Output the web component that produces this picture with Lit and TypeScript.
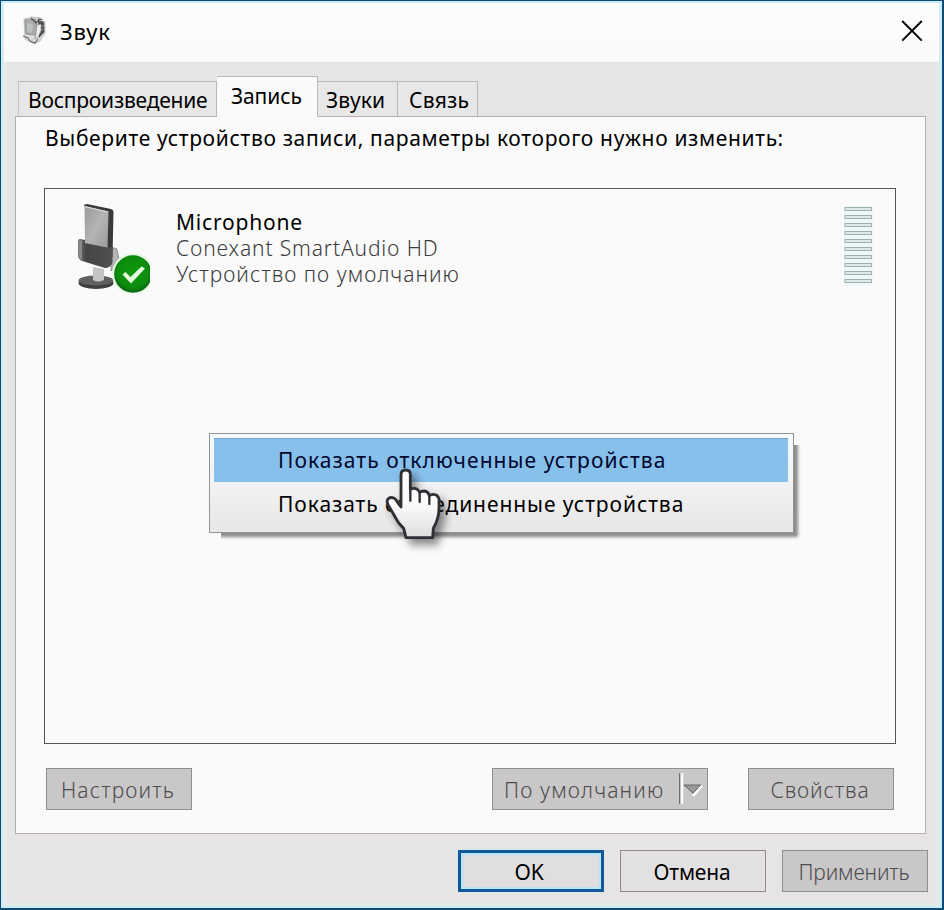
import { LitElement, css, html, svg } from "lit";
import { customElement, property } from "lit/decorators.js";

const speakerIcon = html`
  <svg width="26" height="30" viewBox="0 0 26 30">
    <path d="M3 3 L10 1 L20 2 L24 6 L24 17 L19 25 L13 28 L4 23 Z" fill="#d9dcdb" stroke="#b5b9b8" stroke-width="0.8" />
    <path d="M17 4 L23 6 L23.500 16 L18 22 Z" fill="#505353" />
    <path d="M4 4 L14 3 L16 8 L15 19 L5 18 Z" fill="#a9acab" stroke="#858585" stroke-width="0.8" />
    <path d="M6 7 L12 8 L11 17 L6 16 Z" fill="#bcc0bf" />
    <path d="M10 2 L15 7 L18 3 L21 4" fill="none" stroke="#555" stroke-width="1.200" />
    <path d="M16 9 L20 8 L20 15 L17 21 L14 23 Z" fill="#eceded" stroke="#888" stroke-width="0.7" />
    <path d="M2 20 L7 22 L9 25 L14 27 L17 23" fill="none" stroke="#666" stroke-width="1.100" />
    <path d="M20 10 L23 10 M20 14 L23 13" stroke="#999" stroke-width="0.8" />
  </svg>
`;

const closeIcon = html`
  <svg width="22" height="22" viewBox="0 0 22 22">
    <path d="M1.200 1 L20.800 20.600 M20.800 1 L1.200 20.600" stroke="#000" stroke-width="1.900" fill="none" />
  </svg>
`;

const microphoneIcon = html`
  <svg width="80" height="96" viewBox="0 0 80 96">
    <defs>
      <linearGradient id="face" x1="0" y1="0" x2="1" y2="1">
        <stop offset="0" stop-color="#9a9a9a" />
        <stop offset="0.500" stop-color="#b4b4b4" />
        <stop offset="1" stop-color="#989898" />
      </linearGradient>
      <linearGradient id="holder" x1="0" y1="0" x2="1" y2="0">
        <stop offset="0" stop-color="#707070" />
        <stop offset="0.250" stop-color="#454545" />
        <stop offset="1" stop-color="#505050" />
      </linearGradient>
      <radialGradient id="ok" cx="0.500" cy="0.450" r="0.550">
        <stop offset="0" stop-color="#0f980f" />
        <stop offset="0.750" stop-color="#0d8c0d" />
        <stop offset="1" stop-color="#0b5f14" />
      </radialGradient>
    </defs>
    <ellipse cx="26" cy="86" rx="17.500" ry="6" fill="#3f3f3f" />
    <ellipse cx="26" cy="83.500" rx="17.500" ry="5" fill="#606060" />
    <path d="M23 70 L34 72 L34 83 Q28 86 23 83 Z" fill="#c4c4c4" />
    <path d="M41 50 L47 52 L49 62 L46 70 L41 74 Z" fill="#b4b4b4" stroke="#888" stroke-width="0.8" />
    <path d="M14 9 Q14 7 17 7 L41 12 Q43.500 12.500 43.500 15 L42.500 60 L37 60 L37 17 Z" fill="#3a3a3a" />
    <path d="M14.500 9 L38.500 14.500 L37.500 52 L15 46 Z" fill="url(#face)" />
    <path d="M15 9.600 L38 15" stroke="#dadada" stroke-width="1.200" />
    <path d="M8 44 Q8 42 10 42 L15 43 L15 46 L37 50.500 L42.500 50 L42.500 66 Q40 71 35 71 L12 64 Q8 62 8 58 Z" fill="url(#holder)" />
    <path d="M8.500 44 L12 43 L12 63 L8.500 60 Z" fill="#8a8a8a" />
    <circle cx="63" cy="77" r="21" fill="#e4f9e3" />
    <circle cx="63" cy="77" r="18.800" fill="url(#ok)" />
    <path d="M52.500 77.500 L55.500 75 L60.500 80 L71.500 69.500 L75 71.500 L61 86.500 Z" fill="#e2fadf" />
  </svg>
`;

const levelMeter = html`
  <svg width="29" height="80" viewBox="0 0 29 80">
    <rect width="29" height="80" fill="#eff8f8" />
    ${Array.from({ length: 10 }, (_, i) => svg`
      <rect x="1" y=${1.5 + i * 8} width="26.500" height="3" fill="#dcebea" stroke="#9db1b0" stroke-width="1" />
    `)}
  </svg>
`;

const dropArrow = html`
  <svg width="28" height="40" viewBox="0 0 28 40">
    <path d="M0.500 4 V35" stroke="#6e6e6e" stroke-width="1" />
    <path d="M3.200 4 V35" stroke="#fff" stroke-width="2" />
    <path d="M5 16 H22 L14 24 Z" fill="#9a9a9a" stroke="#666" stroke-width="1" />
    <path d="M14 27 L23 17" stroke="#fff" stroke-width="2.600" />
  </svg>
`;

const handCursor = html`
  <svg width="90" height="90" viewBox="0 0 270 270">
    <defs>
      <linearGradient id="palm" x1="0" y1="0" x2="0" y2="1">
        <stop offset="0.500" stop-color="#fbfbfb" />
        <stop offset="1" stop-color="#dedede" />
      </linearGradient>
    </defs>
    <path
      d="M107 30 Q93 30 93 44 L93 141 Q83 128 76 117 Q66 109 56 115 Q48 121 54 134 L76 172 Q84 190 101 205 L108 233 L188 233 L190 205 Q207 176 207 145 L207 118 Q204 103 190 103 Q183 103 178 107 Q174 94 162 93 Q155 93 149 97 Q143 85 132 85 Q126 85 121 88 L121 44 Q121 30 107 30 Z"
      fill="url(#palm)"
      stroke="#2d3136"
      stroke-width="8.500"
      stroke-linejoin="round"
    />
    <path d="M121 84 V122 M149 96 V126 M178 106 V132" stroke="#2d3136" stroke-width="7" stroke-linecap="round" />
  </svg>
`;

@customElement("dialog-button")
export class DialogButton extends LitElement {
  @property()
  label = "";

  // "normal" | "primary" | "disabled"
  @property({ reflect: true })
  kind = "normal";

  @property({ type: Boolean, reflect: true })
  split = false;

  static styles = css`
    :host {
      display: flex;
      flex: none;
      box-sizing: border-box;
      width: 146px;
      height: 42px;
      font-size: 21px;
    }
    .button {
      flex: 1;
      display: flex;
      align-items: center;
      justify-content: center;
      border: 1px solid #8d898b;
      background: #e2e0e1;
      color: #000;
      white-space: nowrap;
      line-height: 40px;
    }
    .text {
      padding: 2px 2px 0 0;
    }
    :host([kind="primary"]) .button {
      border: 3px solid #0f5a94;
      background: #e0dedf;
      box-shadow: inset 0 0 0 2px #b5e4fb, 0 0 2px #c6ecfb;
      line-height: 36px;
    }
    :host([kind="primary"]) .text {
      padding-right: 4px;
    }
    :host([kind="disabled"]) .button {
      border-color: #8f8f8f;
      background: #c9c7c8;
      color: #4c4c4c;
      font-weight: 300;
    }
    :host([split]) {
      width: 216px;
    }
    :host([split]) .button {
      justify-content: space-between;
      padding-left: 11px;
    }
  `;

  render() {
    return html`
      <div class="button">
        <span class="text">${this.label}</span>
        ${this.split ? dropArrow : ""}
      </div>
    `;
  }
}

@customElement("app-root")
export class AppRoot extends LitElement {
  static styles = css`
    :host {
      display: block;
      font-family: "Noto Sans", "Open Sans", sans-serif;
      font-size: 21px;
      line-height: 26px;
      color: #000;
      white-space: nowrap;
    }
    .window {
      box-sizing: border-box;
      width: 944px;
      height: 910px;
      display: flex;
      flex-direction: column;
      background: #e6e4e5;
      border: 1px solid #0d4a75;
      border-width: 1px 2px 2px 1px;
      box-shadow: inset 0 0 0 2px #c9eef7, inset 0 0 6px 3px #e0f1f1;
      overflow: hidden;
    }
    .title-bar {
      box-sizing: border-box;
      height: 59px;
      margin: 2px 3px 0;
      padding: 0 16px 0 17px;
      display: flex;
      align-items: center;
      background: linear-gradient(#fafffd, #fcfcfb 12px, #fafafa);
    }
    .title {
      flex: 1;
      padding: 0 0 4px 13px;
      font-size: 22px;
      letter-spacing: 0.7px;
    }
    .title-bar svg {
      margin-bottom: 4px;
    }
    .tabs {
      height: 54px;
      display: flex;
      align-items: flex-end;
      padding-left: 17px;
    }
    .tab {
      box-sizing: border-box;
      height: 35px;
      padding: 5px 0 0 8px;
      border: 1px solid #b9b9b9;
      border-left: none;
      border-bottom: none;
      background: #e8e7e8;
    }
    .tab.playback {
      width: 199px;
      border-left: 1px solid #c4c4c4;
      padding-left: 9px;
      letter-spacing: -0.22px;
    }
    .tab.recording {
      width: 101px;
      height: 41px;
      margin-bottom: -1px;
      padding: 6px 0 0 14px;
      background: #fafafa;
      letter-spacing: -0.1px;
      position: relative;
    }
    .tab.sounds {
      width: 80px;
      letter-spacing: 0.1px;
    }
    .tab.comm {
      width: 80px;
      padding-left: 11px;
      letter-spacing: 0.2px;
    }
    .page {
      box-sizing: border-box;
      width: 911px;
      height: 718px;
      margin-left: 14px;
      padding: 8px 29px 0 28px;
      border: 1px solid #b4aeb2;
      background: #fafafa;
      display: flex;
      flex-direction: column;
    }
    .prompt {
      padding-left: 1px;
      letter-spacing: 0.66px;
      margin-bottom: 37px;
    }
    .devices {
      box-sizing: border-box;
      flex: none;
      width: 852px;
      height: 556px;
      border: 1px solid #555;
      padding: 8px 22px 0 25px;
      display: flex;
      align-items: flex-start;
      background: #fafafa;
    }
    .info {
      flex: 1;
      padding: 12px 0 0 26px;
    }
    .name {
      letter-spacing: 0.8px;
    }
    .detail {
      font-weight: 300;
      color: #3c3c3c;
      letter-spacing: 0.85px;
    }
    .detail.status {
      letter-spacing: 1.03px;
    }
    .meter {
      padding-top: 9px;
    }
    .page-actions {
      display: flex;
      padding: 24px 2px 0;
    }
    .configure {
      margin-right: auto;
      letter-spacing: 1.15px;
    }
    .default {
      margin-right: 40px;
      letter-spacing: 1.15px;
    }
    .properties {
      letter-spacing: 0.9px;
    }
    .footer {
      display: flex;
      justify-content: flex-end;
      gap: 16px;
      padding: 16px 14px 0 0;
      letter-spacing: -0.15px;
    }
    .context-menu {
      position: absolute;
      left: 209px;
      top: 433px;
      box-sizing: border-box;
      width: 585px;
      height: 100px;
      padding: 4px 5px 4px 4px;
      border: 1px solid #8f9494;
      background: linear-gradient(#f4fbfc, #f3f2f2 50%, #e8e6e6);
      box-shadow: 4px 4px 3px #8c8a8c;
      clip-path: polygon(0 0, 100% 0, 100% 12px, calc(100% + 12px) 12px, calc(100% + 12px) calc(100% + 12px), 12px calc(100% + 12px), 12px 100%, 0 100%);
    }
    .item {
      box-sizing: border-box;
      height: 44px;
      padding: 9px 0 0 64px;
      letter-spacing: 0.93px;
    }
    .item.active {
      background: #87c0ea;
      color: #00052e;
      letter-spacing: 1.06px;
      border-top: 1px solid #79a5c2;
      padding-top: 8px;
    }
    .cursor {
      position: absolute;
      left: 370px;
      top: 460px;
      filter: drop-shadow(5px 6px 4px rgba(0, 0, 0, 0.45));
    }
  `;

  render() {
    return html`
      <div class="window">
        <div class="title-bar">
          ${speakerIcon}
          <span class="title">Звук</span>
          ${closeIcon}
        </div>
        <div class="tabs">
          <div class="tab playback">Воспроизведение</div>
          <div class="tab recording">Запись</div>
          <div class="tab sounds">Звуки</div>
          <div class="tab comm">Связь</div>
        </div>
        <div class="page">
          <div class="prompt">
            Выберите устройство записи, параметры которого нужно изменить:
          </div>
          <div class="devices">
            ${microphoneIcon}
            <div class="info">
              <div class="name">Microphone</div>
              <div class="detail">Conexant SmartAudio HD</div>
              <div class="detail status">Устройство по умолчанию</div>
            </div>
            <div class="meter">${levelMeter}</div>
          </div>
          <div class="page-actions">
            <dialog-button class="configure" kind="disabled" label="Настроить"></dialog-button>
            <dialog-button class="default" kind="disabled" split label="По умолчанию"></dialog-button>
            <dialog-button class="properties" kind="disabled" label="Свойства"></dialog-button>
          </div>
        </div>
        <div class="footer">
          <dialog-button kind="primary" label="OK"></dialog-button>
          <dialog-button label="Отмена"></dialog-button>
          <dialog-button kind="disabled" label="Применить"></dialog-button>
        </div>
      </div>
      <div class="context-menu">
        <div class="item active">Показать отключенные устройства</div>
        <div class="item">Показать отсоединенные устройства</div>
      </div>
      <div class="cursor">${handCursor}</div>
    `;
  }
}
